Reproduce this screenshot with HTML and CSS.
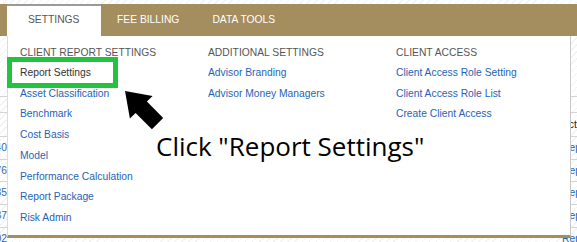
FILE: index.html
```html
<!DOCTYPE html>
<html lang="en">
<head>
    <meta charset="UTF-8">
    <meta name="viewport" content="width=device-width, initial-scale=1.0">
    <title>Settings Menu</title>
    <link rel="stylesheet" href="styles.css">
</head>
<body>
    <div class="topbar">
        <nav class="tabs">
            <a class="tab active" href="#">SETTINGS</a>
            <a class="tab" href="#">FEE BILLING</a>
            <a class="tab" href="#">DATA TOOLS</a>
        </nav>
    </div>

    <div class="report">
        <div class="row row-top"></div>
        <div class="row row-head">
            <span class="cell-left"></span>
            <span></span>
            <span class="cell-right">Action</span>
        </div>
        <div class="row">
            <span class="cell-left">1,240</span>
            <span></span>
            <span class="cell-right"><a href="#">Report</a></span>
        </div>
        <div class="row">
            <span class="cell-left">3,176</span>
            <span></span>
            <span class="cell-right"><a href="#">Report</a></span>
        </div>
        <div class="row">
            <span class="cell-left">2,835</span>
            <span></span>
            <span class="cell-right"><a href="#">Report</a></span>
        </div>
        <div class="row">
            <span class="cell-left">4,537</span>
            <span></span>
            <span class="cell-right"><a href="#">Report</a></span>
        </div>
        <div class="row">
            <span class="cell-left">1,902</span>
            <span></span>
            <span class="cell-right"><a href="#">Report</a></span>
        </div>
    </div>

    <div class="menu">
        <div class="menu-col">
            <h3>CLIENT REPORT SETTINGS</h3>
            <ul>
                <li><a class="current" href="#">Report Settings</a></li>
                <li><a href="#">Asset Classification</a></li>
                <li><a href="#">Benchmark</a></li>
                <li><a href="#">Cost Basis</a></li>
                <li><a href="#">Model</a></li>
                <li><a href="#">Performance Calculation</a></li>
                <li><a href="#">Report Package</a></li>
                <li><a href="#">Risk Admin</a></li>
            </ul>
        </div>
        <div class="menu-col">
            <h3>ADDITIONAL SETTINGS</h3>
            <ul>
                <li><a href="#">Advisor Branding</a></li>
                <li><a href="#">Advisor Money Managers</a></li>
            </ul>
        </div>
        <div class="menu-col">
            <h3>CLIENT ACCESS</h3>
            <ul>
                <li><a href="#">Client Access Role Setting</a></li>
                <li><a href="#">Client Access Role List</a></li>
                <li><a href="#">Create Client Access</a></li>
            </ul>
        </div>
    </div>

    <!-- tutorial annotations -->
    <div class="highlight"></div>
    <svg class="arrow" width="48" height="48" viewBox="0 0 48 48">
        <polygon points="5,5 32.6,9.9 26.9,15.6 43.2,31.9 31.9,43.2 15.6,26.9 9.9,32.6" fill="#000"/>
    </svg>
    <div class="callout">Click "Report Settings"</div>
</body>
</html>
```

FILE: styles.css
```css
body {
    margin: 0;
    height: 242px;
    overflow: hidden;
    position: relative;
    font-family: "Liberation Sans", Arial, sans-serif;
    background: repeating-linear-gradient(135deg, #fff 0 4px, #f2f2f2 4px 5px);
}
.topbar {
    margin-top: 4px;
    height: 32px;
    background-color: #a48d5f;
}
.tabs {
    display: flex;
    height: 100%;
    padding-left: 7px;
}
.tab {
    display: flex;
    align-items: center;
    padding: 0 16.5px 2px;
    color: #fff;
    font-size: 10.3px;
    text-decoration: none;
}
.tab.active {
    background-color: #fff;
    color: #555;
    border-top: 2px solid #9a9a9a;
    padding: 0 21px 4px;
}
.report {
    padding-top: 60px;
    font-size: 10.3px;
}
.row {
    display: grid;
    grid-template-columns: 7px 1fr 15px;
    height: 22.7px;
    line-height: 22.7px;
    border-bottom: 1px solid #d4d4d4;
    box-sizing: border-box;
}
.row-top {
    height: 17px;
    border-top: 1px solid #d4d4d4;
}
.row-head {
    height: 24px;
    line-height: 24px;
    color: #222;
}
.cell-left {
    overflow: hidden;
    white-space: nowrap;
    direction: rtl;
    color: #3a66a8;
}
.cell-right {
    overflow: hidden;
    white-space: nowrap;
}
.cell-right a {
    color: #1f63b6;
    text-decoration: none;
}
.menu {
    position: absolute;
    left: 7px;
    top: 36px;
    width: 564px;
    height: 202px;
    box-sizing: border-box;
    padding: 10px 0 7px 12px;
    display: grid;
    grid-template-columns: 188px 188px 1fr;
    background-color: #fff;
    border-left: 1px solid #dcdcdc;
    border-right: 1px solid #c8c8c8;
    border-bottom: 3px solid #a48d5f;
}
.menu h3 {
    margin: 0 0 3px;
    font-size: 10.3px;
    font-weight: normal;
    line-height: 14px;
    color: #555;
}
.menu ul {
    list-style: none;
    margin: 0;
    padding: 0;
}
.menu li {
    font-size: 10.3px;
    line-height: 20.7px;
}
.menu a {
    color: #1f63b6;
    text-decoration: none;
}
.menu a.current {
    color: #333;
}
.highlight {
    position: absolute;
    left: 7px;
    top: 57px;
    width: 111px;
    height: 31px;
    box-sizing: border-box;
    border: 5px solid #22c43e;
}
.arrow {
    position: absolute;
    left: 120px;
    top: 86px;
}
.callout {
    position: absolute;
    left: 156px;
    top: 129px;
    font-family: "Open Sans", sans-serif;
    font-size: 26px;
    line-height: 35px;
    color: #000;
    white-space: nowrap;
}
```
